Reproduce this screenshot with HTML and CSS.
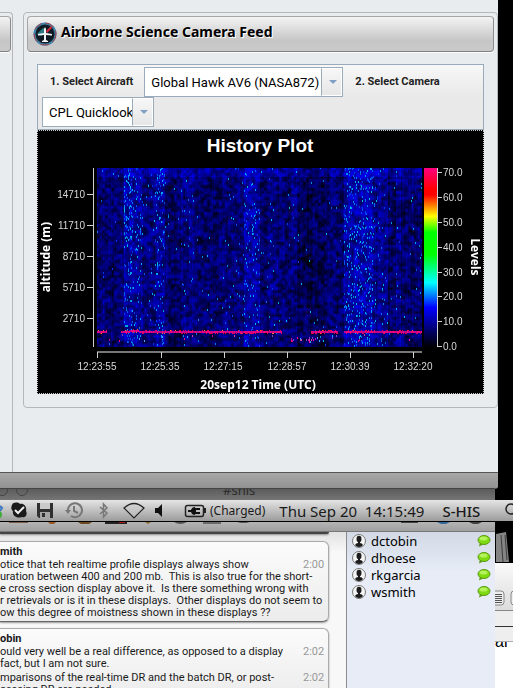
FILE: index.html
```
<!DOCTYPE html>
<html lang="en">
<head>
    <meta charset="UTF-8">
    <meta name="viewport" content="width=device-width, initial-scale=1">
    <title>Airborne Science Camera Feed</title>
    <link rel="stylesheet" href="styles.css">
</head>
<body>
    <main class="browser-window">
        <div class="portal">
            <div class="portlet portlet-left">
                <div class="portlet-header"></div>
            </div>
            <section class="portlet portlet-camera">
                <header class="portlet-header">
                    <svg class="feed-logo" viewBox="0 0 24 24" aria-hidden="true">
                        <circle cx="12" cy="12" r="11.5" fill="#3c86ad"/>
                        <circle cx="12" cy="12" r="11" fill="none" stroke="#a83c48" stroke-dasharray="9 4"/>
                        <circle cx="12" cy="12" r="9.5" fill="#101a22"/>
                        <path d="M4 12 L10 6 L14 10 L8 14 Z" fill="#2b7b83"/>
                        <path d="M13 9 L18 4 L19 6 L14 11 Z" fill="#d8283c"/>
                        <path d="M12 5 L13 7 V11 L19 12 V13.500 L13 13 V18 L15 19 V20 H9 V19 L11 18 V13 L5 13.500 V12 L11 11 V7 Z" fill="#f2f5f6"/>
                    </svg>
                    <h1 class="portlet-title">Airborne Science Camera Feed</h1>
                </header>
                <div class="feed">
                    <form class="feed-toolbar">
                        <label class="feed-label" for="aircraft">1. Select Aircraft</label>
                        <span class="combo combo-aircraft">
                            <select id="aircraft"><option>Global Hawk AV6 (NASA872)</option></select>
                        </span>
                        <label class="feed-label" for="camera">2. Select Camera</label>
                        <span class="combo combo-camera">
                            <select id="camera"><option>CPL Quicklook</option></select>
                        </span>
                    </form>
                    <svg class="plot" viewBox="1 1 445 262" role="img" aria-label="History Plot">
                        <defs>
                            <linearGradient id="levels" x1="0" y1="0" x2="0" y2="1">
                                <stop offset="0" stop-color="#ff0080"/>
                                <stop offset=".12" stop-color="#ff0000"/>
                                <stop offset=".15" stop-color="#ff0000"/>
                                <stop offset=".27" stop-color="#ffff00"/>
                                <stop offset=".36" stop-color="#00ff00"/>
                                <stop offset=".48" stop-color="#00ff00"/>
                                <stop offset=".64" stop-color="#00ffff"/>
                                <stop offset=".78" stop-color="#0000ff"/>
                                <stop offset="1" stop-color="#000000"/>
                            </linearGradient>
                        </defs>
                        <text class="plot-title" x="223" y="22">History Plot</text>
                        <foreignObject x="60" y="38" width="325" height="179">
                            <canvas id="heatmap" class="heatmap" width="325" height="179"></canvas>
                        </foreignObject>
                        <path class="axis" d="M56.5 38V217M50 64.5H56M50 95.5H56M50 126.5H56M50 157.5H56M50 188.5H56"/>
                        <g class="tick tick-end">
                            <text x="48" y="68">14710</text>
                            <text x="48" y="99">11710</text>
                            <text x="48" y="130">8710</text>
                            <text x="48" y="161">5710</text>
                            <text x="48" y="192">2710</text>
                        </g>
                        <path class="axis-base" d="M60 222H385"/>
                        <path class="axis" d="M60.5 222V228M124.5 222V228M187.5 222V228M250.5 222V228M313.5 222V228M376.5 222V228"/>
                        <g class="tick tick-middle">
                            <text x="60" y="240">12:23:55</text>
                            <text x="123" y="240">12:25:35</text>
                            <text x="186" y="240">12:27:15</text>
                            <text x="250" y="240">12:28:57</text>
                            <text x="313" y="240">12:30:39</text>
                            <text x="376" y="240">12:32:20</text>
                        </g>
                        <rect x="387" y="38" width="13" height="179" fill="url(#levels)"/>
                        <path class="axis" d="M400.5 38V217M400 42.5H405M400 67.5H405M400 92.5H405M400 117.5H405M400 142.5H405M400 166.5H405M400 191.5H405M400 216.5H405"/>
                        <g class="tick">
                            <text x="406" y="46">70.0</text>
                            <text x="406" y="71">60.0</text>
                            <text x="406" y="96">50.0</text>
                            <text x="406" y="121">40.0</text>
                            <text x="406" y="146">30.0</text>
                            <text x="406" y="170">20.0</text>
                            <text x="406" y="195">10.0</text>
                            <text x="406" y="220">0.0</text>
                        </g>
                        <text class="axis-title" transform="translate(13 127) rotate(-90)">altitude (m)</text>
                        <text class="axis-title" transform="translate(434 127) rotate(90)">Levels</text>
                        <text class="axis-title" x="221" y="259">20sep12 Time (UTC)</text>
                    </svg>
                </div>
            </section>
        </div>
        <div class="status-bar"></div>
    </main>

    <div class="chat-titlebar">
        <span class="window-dot"></span>
        <span class="window-dot"></span>
        <span class="chat-title">#shis</span>
    </div>

    <nav class="menu-bar" aria-label="Menu bar">
        <svg class="menu-icons" viewBox="0 0 210 21" aria-hidden="true">
            <path d="M0 6L2 8L0 11" fill="none" stroke="#3977c4" stroke-width="2"/>
            <path d="M0 11A4 4 0 0 1 0 18" fill="#3faa35"/>
            <path d="M12 5C13 2 18 2 20 4C24 3 27 7 26 11C28 15 25 18 22 17C16 19 12 15 13 11C11 10 11 7 12 5Z" fill="#1b1b1b"/>
            <path d="M15 10L18 13L24 7" fill="none" stroke="#eee" stroke-width="2"/>
            <path d="M37 3H53V18H39L37 16Z" fill="#303030"/>
            <path d="M40 3H50V9H40Z" fill="#c9c9c9"/>
            <path d="M40 12H50V18H40Z" fill="#a5a5a5"/>
            <path d="M42 13H45V17H42Z" fill="#303030"/>
            <g fill="none" stroke="#777" stroke-width="2">
                <path d="M68 11A7 7 0 1 1 71 16"/>
                <path d="M74 6V11L78 13"/>
            </g>
            <path d="M65 10H71L68 14Z" fill="#777"/>
            <path d="M100 7L107 13L103.500 17V4L107 8L100 14" fill="none" stroke="#777" stroke-width="1.500"/>
            <path d="M124 8Q134 -1 144 8L134 18Z" fill="#ccc" fill-opacity=".4" stroke="#222" stroke-width="1.2"/>
            <path d="M155 8H158L162 4V17L158 13H155Z" fill="#111"/>
            <rect x="185.500" y="5.500" width="18" height="11" rx="2" fill="none" stroke="#222" stroke-width="1.500"/>
            <path d="M204 8H206V13H204Z" fill="#222"/>
            <path d="M188 10H191Q192 7 195 7V8H200V10H196V12H200V14H195V15Q192 15 191 12H188Z" fill="#111"/>
        </svg>
        <span class="menu-battery">(Charged)</span>
        <time class="menu-clock">Thu Sep 20&nbsp; 14:15:49</time>
        <span class="menu-user">S-HIS</span>
        <svg class="menu-search" viewBox="0 0 16 16" aria-hidden="true">
            <circle cx="7" cy="6" r="5" fill="none" stroke="#222" stroke-width="1.5"/>
            <path d="M10 10L14 14" stroke="#222" stroke-width="2"/>
        </svg>
    </nav>

    <div class="desktop">
        <section class="chat-window">
            <div class="chat-toolbar">
                <svg class="toolbar-icons" viewBox="0 0 495 9" aria-hidden="true">
                    <path d="M9 0H28V1H9Z" fill="#7a5c48"/>
                    <path d="M48 0H56L54 2H50Z" fill="#9a5a28"/>
                    <path d="M78 0H92L89 2H81Z" fill="#6b4a20"/>
                    <path d="M105 0H127V2H105Z" fill="#222"/>
                    <path d="M119 0H125V1H119Z" fill="#b01818"/>
                    <path d="M145 0H151L148 2Z" fill="#8a6a30"/>
                    <path d="M174 0Q180 4 187 0Z" fill="#555"/>
                    <path d="M203 0H221V2H203Z" fill="#6a6a6a"/>
                    <path d="M237 0H250L246 1H241Z" fill="#555"/>
                    <path d="M401 0H418V1H401Z" fill="#444"/>
                    <path d="M437 0H450L446 2H441Z" fill="#35669c"/>
                    <path d="M469 0H482L478 2H473Z" fill="#444"/>
                </svg>
            </div>
            <div class="chat-body">
                <div class="messages">
                    <div class="bubble-end"></div>
                    <article class="bubble">
                        <h2 class="author">mith</h2>
                        <div class="message">
                            <p>otice that teh realtime profile displays always show<br>uration between 400 and 200 mb.&nbsp; This is also true for the short-<br>e cross section display above it.&nbsp; Is there something wrong with<br>r retrievals or is it in these displays.&nbsp; Other displays do not seem to<br>ow this degree of moistness shown in these displays ??</p>
                            <time>2:00</time>
                        </div>
                    </article>
                    <article class="bubble">
                        <h2 class="author">obin</h2>
                        <div class="message">
                            <p>ould very well be a real difference, as opposed to a display<br>fact, but I am not sure.</p>
                            <time>2:02</time>
                        </div>
                        <div class="message">
                            <p>mparisons of the real-time DR and the batch DR, or post-<br>cessing DR are needed.</p>
                            <time>2:02</time>
                        </div>
                    </article>
                </div>
                <ul class="buddies">
                    <li><svg class="avatar"><use href="#person"/></svg><span>dctobin</span><svg class="status"><use href="#talk"/></svg></li>
                    <li><svg class="avatar"><use href="#person"/></svg><span>dhoese</span><svg class="status"><use href="#talk"/></svg></li>
                    <li><svg class="avatar"><use href="#person"/></svg><span>rkgarcia</span><svg class="status"><use href="#talk"/></svg></li>
                    <li><svg class="avatar"><use href="#person"/></svg><span>wsmith</span><svg class="status"><use href="#talk"/></svg></li>
                </ul>
            </div>
        </section>
        <aside class="editor-window">
            <div class="editor-backdrop">
                <svg viewBox="0 0 18 30" aria-hidden="true">
                    <path d="M1 2L11 0L14 30H1Z" fill="#858585"/>
                    <path d="M6 3L8 30M10 3L12 28" stroke="#3c3c3c"/>
                </svg>
            </div>
            <div class="editor-toolbar">
                <svg viewBox="0 0 18 18" aria-hidden="true">
                    <rect x="-6" y="2" width="15" height="14" rx="3" fill="#eee" stroke="#888"/>
                    <path d="M0 5.500H7M0 7.500H7M0 9.500H7M0 11.500H7M0 13.500H7" stroke="#555"/>
                    <rect x="16" y="2" width="15" height="14" rx="3" fill="#eee" stroke="#888"/>
                </svg>
            </div>
            <div class="editor-ruler"></div>
            <div class="editor-ruler editor-ruler-lower"></div>
            <p class="editor-text"><span>ar S</span></p>
        </aside>
    </div>

    <svg class="symbols" aria-hidden="true">
        <symbol id="person" viewBox="0 0 14 14">
            <circle cx="7" cy="7" r="6.500" fill="#f4f4f4" stroke="#777"/>
            <ellipse cx="7" cy="5" rx="2.500" ry="3.200" fill="#1c1c1c"/>
            <path d="M3 11Q4 9 6 9V7H8V9Q10 9 11 11Q10 13 7 13Q4 13 3 11Z" fill="#1c1c1c"/>
        </symbol>
        <symbol id="talk" viewBox="0 0 14 12">
            <path d="M3 7L2 11.500L7 9Z" fill="#5f9a16"/>
            <ellipse cx="7" cy="5" rx="6" ry="4.500" fill="#7edb12" stroke="#5f9a16"/>
            <ellipse cx="6.500" cy="3.500" rx="4" ry="2" fill="#b4f25c"/>
        </symbol>
    </svg>
    <script src="plot.js"></script>
</body>
</html>
```
FILE: styles.css
```
* {
    box-sizing: border-box;
}

body {
    margin: 0;
    background-color: #000;
    font-family: Roboto, 'Open Sans', sans-serif;
    font-size: 11px;
    color: #1a1a1a;
    display: flex;
    flex-direction: column;
    height: 100vh;
    overflow: hidden;
}

h1, h2, p, ul {
    margin: 0;
    padding: 0;
}

/* browser window */

.browser-window {
    margin-right: 15px;
    background-color: #e8ecef;
    border-radius: 0 0 4px 0;
    overflow: hidden;
    flex-shrink: 0;
}

.portal {
    display: grid;
    grid-template-columns: 13px 1fr;
    gap: 10px;
    padding-top: 12px;
}

.portlet {
    border: 1px solid #b4b8ba;
    border-radius: 4px;
    padding: 3px;
}

.portlet-left {
    border-left: none;
    border-bottom: none;
    border-radius: 0 4px 0 0;
    padding-left: 0;
}

.portlet-camera {
    margin-bottom: 64px;
}

.portlet-header {
    height: 36px;
    display: flex;
    align-items: center;
    gap: 4px;
    padding: 0 5px;
    border: 1px solid #a6a6a6;
    border-right-color: #8c8c8c;
    border-bottom: 1px solid #808080;
    border-radius: 4px;
    background: linear-gradient(#f3f3f3, #c6c6c6 70%, #cacaca);
    box-shadow: 0 1px 0 #fff;
}

.portlet-left .portlet-header {
    border-left: none;
    border-radius: 0 4px 4px 0;
}

.feed-logo {
    width: 24px;
    height: 24px;
}

.portlet-title {
    font-family: 'Noto Sans', 'Open Sans', sans-serif;
    font-size: 14px;
    line-height: 20px;
    color: #000;
    text-shadow: 1px 1px 0 #fff;
    white-space: nowrap;
    padding-bottom: 4px;
}

.feed {
    margin: 12px 10px 10px;
}

.feed-toolbar {
    display: flex;
    flex-wrap: wrap;
    align-items: center;
    padding: 2px 4px;
    border: 1px solid #99abba;
    background: linear-gradient(#f7f7f7, #e9e9e9 50%);
}

.feed-label {
    font-size: 11px;
    font-weight: bold;
    color: #222;
    padding: 0 11px 2px 8px;
}

.combo {
    position: relative;
    height: 30px;
}

.combo select {
    appearance: none;
    width: 100%;
    height: 30px;
    margin: 0;
    padding: 0 20px 0 6px;
    border: 1px solid #9aabbb;
    border-radius: 0;
    background-color: #fff;
    color: #000;
    font-family: Roboto, 'Open Sans', sans-serif;
    font-size: 13px;
}

.combo-aircraft {
    width: 199px;
    margin-right: 4px;
}

.combo-camera {
    width: 112px;
}

.combo::before {
    content: '';
    position: absolute;
    top: 1px;
    right: 1px;
    bottom: 1px;
    width: 19px;
    border: 1px solid #fff;
    border-left-color: #9aabbb;
    background: linear-gradient(#f7f7f7, #e6e6e6);
    pointer-events: none;
}

.combo::after {
    content: '';
    position: absolute;
    top: 13px;
    right: 6px;
    border: 4px solid transparent;
    border-top-color: #7f9fc6;
    border-bottom: none;
    pointer-events: none;
}

/* history plot */

.plot {
    display: block;
    width: 100%;
    background-color: #000;
    border: 1px dotted #c8ccd0;
}

.heatmap {
    display: block;
    width: 100%;
    height: 100%;
}

.plot-title {
    font: bold 19px 'Liberation Sans', Arial, sans-serif;
    fill: #fff;
    text-anchor: middle;
}

.axis-title {
    font: bold 12px 'Noto Sans', 'Open Sans', sans-serif;
    fill: #fff;
    text-anchor: middle;
}

.tick {
    font: 10px 'Liberation Sans', Arial, sans-serif;
    fill: #d8d8d8;
}

.tick-end {
    text-anchor: end;
}

.tick-middle {
    text-anchor: middle;
}

.axis {
    fill: none;
    stroke: #d0d0d0;
}

.axis-base {
    stroke: #777;
    stroke-width: 2;
}

.status-bar {
    height: 17px;
    border-top: 1px solid #555;
    border-bottom: 1px solid #444;
    background: linear-gradient(#a8a8a8, #929292);
}

/* chat window behind the menu bar */

.chat-titlebar {
    height: 11px;
    margin-right: 18px;
    display: flex;
    align-items: flex-end;
    overflow: hidden;
    flex-shrink: 0;
    background: linear-gradient(#5c5c5c, #757575);
}

.window-dot {
    width: 12px;
    height: 12px;
    margin-left: -4px;
    margin-bottom: 4px;
    border: 1px solid #444;
    border-radius: 50%;
}

.window-dot + .window-dot {
    margin-left: 8px;
}

.chat-title {
    flex: 1;
    padding-left: 195px;
    font-family: 'Noto Sans', 'Open Sans', sans-serif;
    font-size: 13px;
    line-height: 20px;
    color: #2c2c2c;
}

.menu-bar {
    height: 22px;
    display: flex;
    align-items: center;
    flex-shrink: 0;
    overflow: hidden;
    border-bottom: 1px solid #000;
    background: linear-gradient(#e4e4e4, #9c9c9c);
    font-family: 'Noto Sans', 'Open Sans', sans-serif;
    font-size: 15px;
    color: #1a1a1a;
    white-space: nowrap;
}

.menu-icons {
    width: 210px;
    height: 21px;
    flex-shrink: 0;
}

.menu-battery {
    font-size: 12px;
}

.menu-clock {
    margin-left: 14px;
}

.menu-user {
    margin-left: 18px;
    font-weight: 500;
}

.menu-search {
    width: 16px;
    height: 16px;
    flex-shrink: 0;
    margin-left: 24px;
}

.desktop {
    flex: 1;
    min-height: 0;
    display: grid;
    grid-template-columns: 1fr 18px;
}

.chat-window {
    min-height: 0;
    min-width: 0;
    display: flex;
    flex-direction: column;
}

.chat-toolbar {
    height: 10px;
    flex-shrink: 0;
    background: linear-gradient(#b4b4b4, #a0a0a0);
    border-bottom: 1px solid #777;
}

.toolbar-icons {
    display: block;
    width: 100%;
    height: 9px;
}

.chat-body {
    flex: 1;
    min-height: 0;
    display: grid;
    grid-template-columns: 1fr 149px;
}

.messages {
    overflow: hidden;
    padding-right: 17px;
    background: linear-gradient(#e2e2e2, #f8f8f8 20px);
    font-size: 11px;
    line-height: 12px;
}

.bubble-end {
    height: 2px;
    margin-bottom: 7px;
    background-color: #444;
    border-radius: 0 0 4px 0;
    box-shadow: 0 1px 2px #888;
}

.bubble {
    margin-bottom: 6px;
    padding: 2px 5px 0 0;
    border: 1px solid #aaa;
    border-left: none;
    border-bottom-color: #666;
    border-radius: 0 6px 6px 0;
    background: linear-gradient(#fbfbfb, #ececec);
    box-shadow: 0 1px 2px #999;
}

.author {
    font-size: 11px;
    line-height: 15px;
}

.message {
    display: flex;
    justify-content: space-between;
    margin-bottom: 2px;
    white-space: nowrap;
}

.message p {
    flex: 1;
    min-width: 0;
}

/* the time sits on the first line, longer lines run beneath it */
.message time {
    width: 20px;
    margin-left: -20px;
    text-align: right;
    color: #999;
}

.buddies {
    list-style: none;
    border-left: 1px solid #8c8c8c;
    background: linear-gradient(#d2d9e5, #e7ecf6 40px);
    font-family: 'Noto Sans', 'Open Sans', sans-serif;
    font-size: 13px;
    color: #000;
}

.buddies li {
    display: flex;
    align-items: center;
    gap: 5px;
    height: 17px;
    padding: 0 4px 0 5px;
}

.buddies span {
    flex: 1;
}

.avatar {
    width: 14px;
    height: 14px;
}

.status {
    width: 14px;
    height: 12px;
}

/* document window at the right edge */

.editor-window {
    overflow: hidden;
    background-color: #fff;
}

.editor-backdrop {
    height: 41px;
    padding-top: 10px;
    background-color: #000;
}

.editor-backdrop svg,
.editor-toolbar svg {
    display: block;
    width: 18px;
}

.editor-toolbar {
    height: 48px;
    padding-top: 26px;
    background: linear-gradient(#fafafa, #dcdcdc);
    border-bottom: 1px solid #888;
}

.editor-ruler {
    height: 16px;
    background-color: #eee;
    border-bottom: 1px solid #333;
}

.editor-ruler-lower {
    height: 15px;
    border-bottom-color: #aaa;
}

.editor-text {
    height: 8px;
    display: flex;
    align-items: flex-end;
    overflow: hidden;
    font: 16px/16px 'Liberation Sans', Arial, sans-serif;
    color: #000;
    white-space: nowrap;
}

.symbols {
    display: none;
}
```
FILE: plot.js
```
var canvas = document.getElementById('heatmap');
var ctx = canvas.getContext('2d');
var W = canvas.width;
var H = canvas.height;
var seed = 872;

function rand() {
    seed = (seed * 1664525 + 1013904223) % 4294967296;
    return seed / 4294967296;
}

// [first column, last column, brightness, chance of a bright speckle]
var bands = [
    [27, 35, 60, 0.09],
    [36, 44, 45, 0.04],
    [45, 58, 20, 0.01],
    [59, 67, 50, 0.07],
    [84, 96, 22, 0.01],
    [128, 146, 14, 0.01],
    [147, 162, 58, 0.04],
    [171, 180, 20, 0.01],
    [195, 199, 25, 0.01],
    [247, 275, 60, 0.07],
    [276, 290, 35, 0.02],
    [299, 303, 35, 0.02]
];

// coarse noise grid, blended between cells
var step = 3;
var cols = Math.ceil(W / step) + 2;
var grid = [];
for (var i = 0; i < cols * (Math.ceil(H / step) + 2); i++) {
    grid.push(rand());
}

var streak = [];
for (var x = 0; x < W; x++) {
    streak.push(rand() * 28 - 14);
}

function noise(x, y) {
    var gx = Math.floor(x / step), gy = Math.floor(y / step);
    var fx = x / step - gx, fy = y / step - gy;
    var k = gy * cols + gx;
    var top = grid[k] * (1 - fx) + grid[k + 1] * fx;
    var bottom = grid[k + cols] * (1 - fx) + grid[k + cols + 1] * fx;
    return top * (1 - fy) + bottom * fy;
}

for (var y = 0; y < H; y++) {
    for (x = 0; x < W; x++) {
        var level = 18 + noise(x, y) * 150 + rand() * 25 + streak[x];
        var chance = 0.003;
        bands.forEach(function (b) {
            if (x >= b[0] && x <= b[1]) {
                level += b[2];
                chance = b[3];
            }
        });
        if (y < 9) level += 45;
        if (x > 200 && x < 228) level -= 20;
        level = Math.max(0, Math.min(235, level));
        ctx.fillStyle = 'rgb(0,0,' + Math.round(level) + ')';
        ctx.fillRect(x, y, 1, 1);
        if (rand() < chance) {
            ctx.fillStyle = 'rgb(0,' + Math.round(40 + rand() * 150) + ',' + Math.round(210 + rand() * 45) + ')';
            ctx.fillRect(x, y - 1, 1, 2);
        }
    }
}

// surface return
var surface = [[0, 10], [24, 185], [214, 241], [247, 325]];
surface.forEach(function (s) {
    for (var x = s[0]; x < s[1]; x++) {
        var lift = x > 32 && x < 42 ? -1 : 0;
        ctx.fillStyle = rand() < 0.5 ? '#f0007c' : '#c0008c';
        ctx.fillRect(x, 163 + lift, 1, 2);
        if (rand() < 0.5) {
            ctx.fillStyle = rand() < 0.2 ? '#ff7040' : '#e00050';
            ctx.fillRect(x, 162 + lift + Math.floor(rand() * 2) * 3, 1, 1);
        }
    }
});

// low scatter under the gaps
var dots = ['#ff0080', '#d040a0', '#40a0ff', '#c000a0', '#8040c0'];
for (i = 0; i < 20; i++) {
    ctx.fillStyle = dots[i % dots.length];
    ctx.fillRect(190 + Math.floor(rand() * 34), 169 + Math.floor(rand() * 5), 1, 2);
}
for (i = 0; i < 18; i++) {
    ctx.fillStyle = dots[(i + 2) % dots.length];
    ctx.fillRect(Math.floor(rand() * W), 166 + Math.floor(rand() * 8), 1, 2);
}
```
